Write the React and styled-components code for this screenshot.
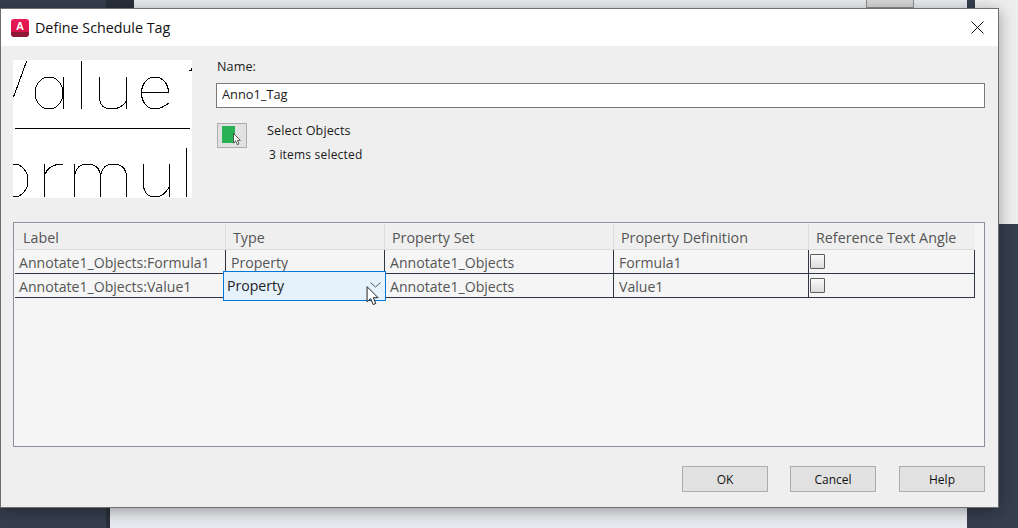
import React from "react";
import styled, { createGlobalStyle } from "styled-components";

const Global = createGlobalStyle`
  html, body {
    margin: 0;
    padding: 0;
    height: 528px;
    overflow: hidden;
    background: #353f4d;
  }
`;

const Desktop = styled.div`
  position: relative;
  width: 1018px;
  height: 528px;
  display: flex;
  overflow: hidden;
  font-family: "Open Sans", "Noto Sans", sans-serif;
`;

const LeftRail = styled.div`
  width: 106px;
  background: #353f4d;
`;

const RailEdge = styled.div`
  width: 4px;
  background: #29303c;
`;

const Canvas = styled.div`
  width: 857px;
  background: #e7eaee;
  display: flex;
  align-items: flex-start;
`;

const CanvasTab = styled.div`
  width: 24px;
  height: 8px;
  background: #29303c;
`;

const CanvasButton = styled.div`
  margin-left: 732px;
  width: 46px;
  height: 7px;
  background: #d6d6d6;
  border: 1px solid #8c8c8c;
  border-top: 0;
`;

const RightRail = styled.div`
  flex: 1;
  background: #353f4d;
  padding-left: 8px;
`;

const RightPanel = styled.div`
  height: 224px;
  background: #ededed;
`;

const Dialog = styled.div`
  position: absolute;
  left: 0;
  top: 8px;
  width: 997px;
  height: 498px;
  background: #efefef;
  border: 1px solid #6e6e6e;
  box-shadow: 0 3px 14px rgba(0, 0, 0, 0.35);
  display: flex;
  flex-direction: column;
`;

const TitleBar = styled.div`
  height: 37px;
  background: #fff;
  display: flex;
  align-items: center;
  padding: 0 14px 0 10px;
  flex-shrink: 0;
`;

const Logo = styled.div`
  width: 18px;
  height: 18px;
  border-radius: 3px;
  background: linear-gradient(#ef1c5c 0, #d4124a 72%, #8f1a36 72%, #8f1a36 100%);
  color: #fff;
  font: bold 11px/14px "Liberation Sans", sans-serif;
  text-align: center;
`;

const Title = styled.div`
  margin-left: 6px;
  flex: 1;
  font-size: 14.3px;
  color: #111;
`;

const Body = styled.div`
  flex: 1;
  padding: 14px 13px 14px 12px;
  display: flex;
  flex-direction: column;
`;

const TopSection = styled.div`
  display: flex;
  gap: 24px;
  height: 138px;
`;

const Preview = styled.div`
  width: 179px;
  height: 138px;
  background: #fff;
  flex-shrink: 0;
`;

const Fields = styled.div`
  flex: 1;
  display: flex;
  flex-direction: column;
`;

const SmallText = styled.div`
  font-size: 12.6px;
  letter-spacing: 0.1px;
  line-height: 14px;
  color: #1a1a1a;
`;

const NameLabel = styled(SmallText)`
  margin-left: 1px;
`;

const NameInput = styled.input`
  box-sizing: border-box;
  width: 769px;
  height: 25px;
  margin: 9px 0 15px;
  padding: 0 5px 4px;
  border: 1px solid #7a7a7a;
  background: #fff;
  font: 12.8px "Open Sans", sans-serif;
  color: #1a1a1a;
  outline: none;
`;

const SelectRow = styled.div`
  display: flex;
  gap: 20px;
  margin-left: 1px;
`;

const PickButton = styled.div`
  box-sizing: border-box;
  width: 30px;
  height: 25px;
  background: #e1e1e1;
  border: 1px solid #adadad;
  padding: 2px 4px;
  position: relative;
`;

const Swatch = styled.div`
  width: 13px;
  height: 17px;
  background: #27b355;
`;

const SelectText = styled.div`
  display: flex;
  flex-direction: column;
  gap: 10px;
  margin-top: 1px;
`;

const Count = styled(SmallText)`
  margin-left: 2px;
  font-size: 12px;
  letter-spacing: 0.2px;
`;

const Table = styled.div`
  position: relative;
  box-sizing: border-box;
  height: 225px;
  margin-top: 24px;
  background: #f5f5f5;
  border: 1px solid #8a8f9c;
  padding: 1px;
  font-size: 14.1px;
`;

const Row = styled.div`
  display: grid;
  grid-template-columns: 211px 159px 229px 195px 166px;
  width: 960px;
`;

const HeadCell = styled.div`
  box-sizing: border-box;
  height: 26px;
  padding-left: 7px;
  font-size: 14.3px;
  line-height: 28px;
  background: #efefef;
  color: #555;
  border-right: 1px solid #dcdcdc;
  border-bottom: 1px solid #dcdcdc;
  &:first-child {
    padding-left: 8px;
  }
  &:last-child {
    border-right: 0;
  }
`;

const Cell = styled.div`
  box-sizing: border-box;
  height: 24px;
  padding-left: 5px;
  line-height: 26px;
  color: #555;
  border-right: 1px solid #2f3542;
  border-bottom: 1px solid #2f3542;
  white-space: nowrap;
  &:first-child {
    padding-left: 4px;
  }
`;

const CheckCell = styled(Cell)`
  padding-left: 1px;
  display: flex;
  align-items: center;
`;

const Check = styled.div`
  box-sizing: border-box;
  width: 15px;
  height: 15px;
  border: 1px solid #5c5c5c;
  border-radius: 1px;
  background: linear-gradient(#fafafa, #dcdcdc);
`;

const Dropdown = styled.div`
  position: absolute;
  left: 209px;
  top: 48px;
  box-sizing: border-box;
  width: 163px;
  height: 30px;
  padding: 0 0 2px 3px;
  display: flex;
  align-items: center;
  justify-content: space-between;
  background: #e5f1fb;
  border: 1px solid #0078d7;
  color: #222;
`;

const Cursor = styled.svg`
  position: absolute;
  left: 352px;
  top: 63px;
`;

const Footer = styled.div`
  display: flex;
  justify-content: flex-end;
  margin-top: 19px;
`;

const Action = styled.button`
  box-sizing: border-box;
  width: 86px;
  height: 26px;
  margin-left: ${(p) => p.$gap}px;
  padding: 0;
  background: #e1e1e1;
  border: 1px solid #adadad;
  font: 12px "Open Sans", sans-serif;
  color: #111;
`;

const columns = ["Label", "Type", "Property Set", "Property Definition", "Reference Text Angle"];
const rows = [
  ["Annotate1_Objects:Formula1", "Property", "Annotate1_Objects", "Formula1"],
  ["Annotate1_Objects:Value1", "", "Annotate1_Objects", "Value1"],
];

function TagPreview() {
  return (
    <svg width="179" height="138" viewBox="0 0 179 138" fill="none" stroke="#000" strokeWidth="1" shapeRendering="crispEdges">
      <path d="M13.7 1 L0.5 37" />
      <ellipse cx="36" cy="33" rx="14" ry="16" />
      <path d="M50.5 17 V49" />
      <path d="M68.5 1 V49" />
      <path d="M86.5 17 V37 Q86.5 49 99 49 Q108 49 113.5 41 M113.5 17 V49" />
      <path d="M128.5 32 H155.5 C155 22 148 17 142 17 C134 17 128.5 24 128.5 33 C128.5 42 134 49 142 49 C148 49 152 46 156 43" />
      <path d="M176 10 H178 M178 8 V11" />
      <path d="M2 68.5 H177" />
      <ellipse cx="1" cy="120.5" rx="14" ry="16.5" />
      <path d="M31.5 137 V104 M31.5 115 Q36 104 50 104" />
      <path d="M61.5 104 V137 M61.5 117 Q63 104 74 104 Q87 104 87.5 117 V137 M87.5 117 Q89 104 100 104 Q113 104 113.5 117 V137" />
      <path d="M130.5 104 V124 Q130.5 137 143 137 Q150 137 156.5 127 M156.5 104 V137" />
      <path d="M173.5 88 V137" />
    </svg>
  );
}

function Arrow({ size, style }) {
  return (
    <svg width={size} height={size * 1.4} viewBox="0 0 10 14" style={style}>
      <path d="M0.5 0.5 V11 L3 8.8 L4.8 13 L6.6 12.2 L4.9 8.2 H8.2 Z" fill="#fff" stroke="#222" strokeWidth="0.8" strokeLinejoin="round" />
    </svg>
  );
}

export default function App() {
  return (
    <Desktop>
      <Global />
      <LeftRail />
      <RailEdge />
      <Canvas>
        <CanvasTab />
        <CanvasButton />
      </Canvas>
      <RightRail>
        <RightPanel />
      </RightRail>

      <Dialog>
        <TitleBar>
          <Logo>A</Logo>
          <Title>Define Schedule Tag</Title>
          <svg width="13" height="13" viewBox="0 0 13 13" stroke="#111" strokeWidth="1">
            <path d="M0.5 0.5 L12.5 12.5 M12.5 0.5 L0.5 12.5" />
          </svg>
        </TitleBar>
        <Body>
          <TopSection>
            <Preview>
              <TagPreview />
            </Preview>
            <Fields>
              <NameLabel>Name:</NameLabel>
              <NameInput defaultValue="Anno1_Tag" />
              <SelectRow>
                <PickButton>
                  <Swatch />
                  <Arrow size={9} style={{ position: "absolute", left: 15, top: 9 }} />
                </PickButton>
                <SelectText>
                  <SmallText>Select Objects</SmallText>
                  <Count>3 items selected</Count>
                </SelectText>
              </SelectRow>
            </Fields>
          </TopSection>

          <Table>
            <Row>
              {columns.map((c) => (
                <HeadCell key={c}>{c}</HeadCell>
              ))}
            </Row>
            {rows.map((r, i) => (
              <Row key={i}>
                {r.map((v, j) => (
                  <Cell key={j}>{v}</Cell>
                ))}
                <CheckCell>
                  <Check />
                </CheckCell>
              </Row>
            ))}
            <Dropdown>
              Property
              <svg width="11" height="6" viewBox="0 0 11 6" fill="none" stroke="#555" style={{ marginRight: 4 }}>
                <path d="M0.5 0.5 L5.5 5 L10.5 0.5" />
              </svg>
            </Dropdown>
            <Cursor width="15" height="20" viewBox="0 0 10 14">
              <path d="M0.5 0.5 V11 L3 8.8 L4.8 13 L6.6 12.2 L4.9 8.2 H8.2 Z" fill="#fff" stroke="#222" strokeWidth="0.7" strokeLinejoin="round" />
            </Cursor>
          </Table>

          <Footer>
            <Action $gap={0}>OK</Action>
            <Action $gap={22}>Cancel</Action>
            <Action $gap={23}>Help</Action>
          </Footer>
        </Body>
      </Dialog>
    </Desktop>
  );
}
